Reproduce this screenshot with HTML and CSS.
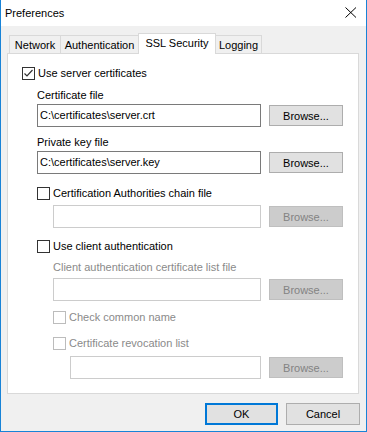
FILE: index.html
```html
<!DOCTYPE html>
<html lang="en">
<head>
    <meta charset="UTF-8">
    <meta name="viewport" content="width=device-width, initial-scale=1.0">
    <title>Preferences</title>
    <link rel="stylesheet" href="styles.css">
</head>
<body>
    <div class="window">
        <div class="titlebar">
            <span class="title">Preferences</span>
            <svg class="close" width="12" height="11" viewBox="0 0 12 11">
                <path d="M0.5 0.5 L11 10.5 M11 0.5 L0.5 10.5" stroke="#000" stroke-width="1" fill="none"/>
            </svg>
        </div>

        <div class="tabs">
            <div class="tab tab-network">Network</div>
            <div class="tab tab-auth">Authentication</div>
            <div class="tab tab-ssl active">SSL Security</div>
            <div class="tab tab-logging">Logging</div>
        </div>

        <div class="panel">
            <!-- Server certificates -->
            <div class="check">
                <span class="cbox">
                    <svg width="11" height="11" viewBox="0 0 11 11"><polyline points="1.5,5.5 4,8 9.5,2" fill="none" stroke="#333" stroke-width="1.2"/></svg>
                </span>
                Use server certificates
            </div>
            <div class="indent">
                <div class="label mt-7">Certificate file</div>
                <div class="field mt-1">
                    <div class="input">C:\certificates\server.crt</div>
                    <button class="btn">Browse...</button>
                </div>
                <div class="label mt-8">Private key file</div>
                <div class="field mt-1">
                    <div class="input">C:\certificates\server.key</div>
                    <button class="btn">Browse...</button>
                </div>

                <!-- CA chain -->
                <div class="check mt-12"><span class="cbox"></span>Certification Authorities chain file</div>
                <div class="indent-2">
                    <div class="field mt-4">
                        <div class="input disabled"></div>
                        <button class="btn disabled">Browse...</button>
                    </div>
                </div>

                <!-- Client authentication -->
                <div class="check mt-11"><span class="cbox"></span>Use client authentication</div>
                <div class="indent-2">
                    <div class="label grey mt-6">Client authentication certificate list file</div>
                    <div class="field mt-3">
                        <div class="input disabled"></div>
                        <button class="btn disabled">Browse...</button>
                    </div>
                    <div class="check grey mt-9"><span class="cbox disabled"></span>Check common name</div>
                    <div class="check grey mt-11"><span class="cbox disabled"></span>Certificate revocation list</div>
                    <div class="indent-3">
                        <div class="field mt-5">
                            <div class="input disabled"></div>
                            <button class="btn disabled">Browse...</button>
                        </div>
                    </div>
                </div>
            </div>
        </div>

        <div class="footer">
            <button class="btn btn-ok">OK</button>
            <button class="btn btn-cancel">Cancel</button>
        </div>
    </div>
</body>
</html>
```

FILE: styles.css
```css
body {
    margin: 0;
    font-family: 'Liberation Sans', Arial, sans-serif;
    font-size: 11px;
    color: #000;
    background: #fff;
}

.window {
    width: 367px;
    height: 432px;
    box-sizing: border-box;
    border: 1px solid #1883d7;
    border-top: none;
    background: #f0f0f0;
}

.titlebar {
    height: 26px;
    background: #fff;
    display: flex;
    align-items: center;
    justify-content: space-between;
    padding: 0 9px 0 4px;
}

.title {
    font-size: 11px;
    margin-top: -1px;
}

.close {
    display: block;
    margin-top: -1px;
}

/* Tabs */
.tabs {
    display: flex;
    align-items: flex-end;
    height: 20px;
    margin: 7px 0 0 8px;
}

.tab {
    box-sizing: border-box;
    height: 18px;
    border: 1px solid #d9d9d9;
    border-bottom: none;
    background: #f0f0f0;
    text-align: center;
    line-height: 19px;
    margin-left: -1px;
}

.tab-network { width: 52px; margin-left: 0; }
.tab-auth { width: 79px; }
.tab-ssl { width: 78px; }
.tab-logging { width: 47px; }

.tab.active {
    height: 21px;
    background: #fff;
    position: relative;
    z-index: 1;
    margin-bottom: -1px;
    line-height: 19px;
}

/* Panel */
.panel {
    box-sizing: border-box;
    width: 352px;
    height: 341px;
    margin-left: 6px;
    border: 1px solid #d9d9d9;
    background: #fff;
    padding: 12px 15px 0 14px;
}

.indent { padding-left: 15px; }
.indent-2 { padding-left: 16px; }
.indent-3 { padding-left: 17px; }

.check {
    display: flex;
    align-items: center;
    height: 15px;
    line-height: 15px;
}

.cbox {
    box-sizing: border-box;
    width: 13px;
    height: 13px;
    border: 1px solid #333;
    background: #fff;
    margin-right: 3px;
    flex-shrink: 0;
}

.cbox svg {
    display: block;
}

.cbox.disabled {
    border-color: #bcbcbc;
}

.label {
    height: 15px;
    line-height: 15px;
}

.grey {
    color: #8a8a8a;
}

.field {
    display: flex;
    align-items: center;
    gap: 8px;
    height: 23px;
}

.input {
    flex: 1;
    box-sizing: border-box;
    height: 23px;
    border: 1px solid #7a7a7a;
    background: #fff;
    padding-left: 2px;
    line-height: 21px;
    white-space: nowrap;
}

.input.disabled {
    border-color: #cccccc;
}

.btn {
    box-sizing: border-box;
    width: 74px;
    height: 21px;
    border: 1px solid #adadad;
    background: #e1e1e1;
    font-family: inherit;
    font-size: 11px;
    color: #000;
    padding: 0;
}

.btn.disabled {
    background: #cccccc;
    border-color: #bfbfbf;
    color: #838383;
}

.mt-1 { margin-top: 1px; }
.mt-3 { margin-top: 3px; }
.mt-4 { margin-top: 4px; }
.mt-5 { margin-top: 5px; }
.mt-6 { margin-top: 6px; }
.mt-7 { margin-top: 7px; }
.mt-8 { margin-top: 8px; }
.mt-9 { margin-top: 9px; }
.mt-11 { margin-top: 11px; }
.mt-12 { margin-top: 12px; }

/* Footer buttons */
.footer {
    display: flex;
    justify-content: flex-end;
    gap: 8px;
    margin-top: 9px;
    padding-right: 6px;
}

.btn-ok {
    width: 73px;
    height: 22px;
    border: 2px solid #0078d7;
}

.btn-cancel {
    height: 22px;
}
```
